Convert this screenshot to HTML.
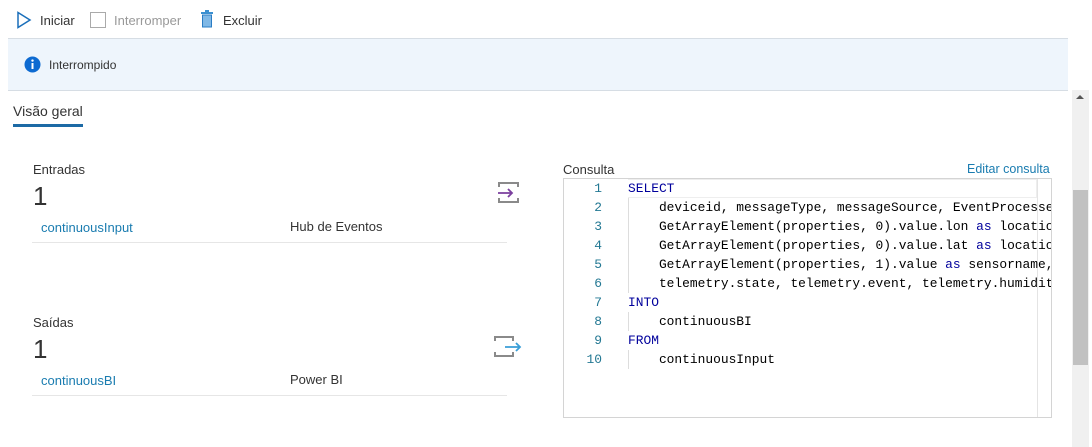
<!DOCTYPE html>
<html><head><meta charset="utf-8"><style>
*{margin:0;padding:0;box-sizing:border-box}
body{width:1092px;height:447px;overflow:hidden;background:#fff;font-family:"Liberation Sans",sans-serif;font-size:13px;color:#333;position:relative}
.a{position:absolute;white-space:nowrap}
.code{font-family:"Liberation Mono",monospace;font-size:12.9px;line-height:19px}
.kw{color:#00009c}
.ln{position:absolute;left:563px;width:39px;text-align:right;color:#237893}
.bl{color:#1a7cb0}
.src div{white-space:pre}
</style></head><body>
<svg class="a" style="left:16px;top:11px" width="16" height="18"><path d="M2 1.5 L14 9 L2 16.5 Z" fill="none" stroke="#1a6fba" stroke-width="1.5"/></svg>
<div class="a" style="left:40px;top:13px;color:#333">Iniciar</div>
<div class="a" style="left:90px;top:12px;width:16px;height:16px;border:1px solid #aaa"></div>
<div class="a" style="left:114px;top:13px;color:#999">Interromper</div>
<svg class="a" style="left:200px;top:10px" width="14" height="18"><rect x="1" y="2" width="12" height="2" fill="#3a8fd0"/><rect x="5" y="0" width="4" height="2" fill="#3a8fd0"/><rect x="2.5" y="5" width="9" height="12" fill="#7fb8e6" stroke="#2a7cc4"/></svg>
<div class="a" style="left:223px;top:13px">Excluir</div>
<div class="a" style="left:8px;top:38px;width:1060px;height:53px;background:#eef5fc;border-top:1px solid #d6dde4;border-bottom:1px solid #d6dde4"></div>
<svg class="a" style="left:24px;top:56px" width="17" height="17"><circle cx="8.5" cy="8.5" r="8" fill="#0d6ad1"/><rect x="7.5" y="7" width="2" height="6" fill="#fff"/><circle cx="8.5" cy="4.6" r="1.2" fill="#fff"/></svg>
<div class="a" style="left:49px;top:58px;font-size:12px;color:#333">Interrompido</div>
<div class="a" style="left:13px;top:103px;font-size:14px;color:#333">Visão geral</div>
<div class="a" style="left:13px;top:124px;width:70px;height:3px;background:#1d6aa5"></div>
<div class="a" style="left:1072px;top:90px;width:17px;height:357px;background:#f0f0f0"></div>
<div class="a" style="left:1073px;top:190px;width:15px;height:175px;background:#c1c1c1"></div>
<svg class="a" style="left:1075px;top:94px" width="10" height="6"><path d="M1 5 L5 1 L9 5Z" fill="#555"/></svg>
<div class="a" style="left:33px;top:162px">Entradas</div>
<div class="a" style="left:33px;top:181px;font-size:26px;font-weight:300;color:#333">1</div>
<svg class="a" style="left:496px;top:181px" width="26" height="24"><path d="M3 6V2H22V6M3 17V21H22V17" fill="none" stroke="#8a8a8a" stroke-width="2"/><path d="M2 12H16M12 8L16 12L12 16" fill="none" stroke="#7b3f9e" stroke-width="1.8"/></svg>
<div class="a bl" style="left:41px;top:220px">continuousInput</div>
<div class="a" style="left:290px;top:219px">Hub de Eventos</div>
<div class="a" style="left:32px;top:242px;width:475px;height:1px;background:#e6e6e6"></div>
<div class="a" style="left:33px;top:315px">Saídas</div>
<div class="a" style="left:33px;top:334px;font-size:26px;font-weight:300">1</div>
<svg class="a" style="left:493px;top:335px" width="30" height="24"><path d="M2 6V2H20V6M2 17V21H20V17" fill="none" stroke="#8a8a8a" stroke-width="2"/><path d="M12 12H27M23 8L27 12L23 16" fill="none" stroke="#3a9fd8" stroke-width="1.8"/></svg>
<div class="a bl" style="left:41px;top:373px">continuousBI</div>
<div class="a" style="left:290px;top:372px">Power BI</div>
<div class="a" style="left:32px;top:395px;width:475px;height:1px;background:#e6e6e6"></div>
<div class="a" style="left:563px;top:162px">Consulta</div>
<div class="a bl" style="left:967px;top:162px;font-size:12.5px">Editar consulta</div>
<div class="a" style="left:563px;top:178px;width:489px;height:240px;border:1px solid #d4d4d4"></div>
<div class="a" style="left:1037px;top:179px;width:1px;height:238px;background:#e4e4e4"></div>
<div class="a" style="left:628px;top:179px;width:409px;height:19px;border:1px solid #eee;border-left:none"></div>
<div class="a" style="left:628px;top:198px;width:1px;height:95px;background:#ddd"></div>
<div class="a" style="left:628px;top:312px;width:1px;height:19px;background:#ddd"></div>
<div class="a" style="left:628px;top:350px;width:1px;height:19px;background:#ddd"></div>
<div class="code">
<div class="ln" style="top:179px">1</div><div class="ln" style="top:198px">2</div><div class="ln" style="top:217px">3</div><div class="ln" style="top:236px">4</div><div class="ln" style="top:255px">5</div><div class="ln" style="top:274px">6</div><div class="ln" style="top:293px">7</div><div class="ln" style="top:312px">8</div><div class="ln" style="top:331px">9</div><div class="ln" style="top:350px">10</div>
<div class="a src" style="left:628px;top:179px;width:423px;overflow:hidden;color:#000">
<div><span class="kw">SELECT</span></div>
<div>    deviceid, messageType, messageSource, EventProcessedUtcTime</div>
<div>    GetArrayElement(properties, 0).value.lon <span class="kw">as</span> location</div>
<div>    GetArrayElement(properties, 0).value.lat <span class="kw">as</span> location</div>
<div>    GetArrayElement(properties, 1).value <span class="kw">as</span> sensorname,</div>
<div>    telemetry.state, telemetry.event, telemetry.humidity</div>
<div><span class="kw">INTO</span></div>
<div>    continuousBI</div>
<div><span class="kw">FROM</span></div>
<div>    continuousInput</div>
</div></div>
</body></html>
